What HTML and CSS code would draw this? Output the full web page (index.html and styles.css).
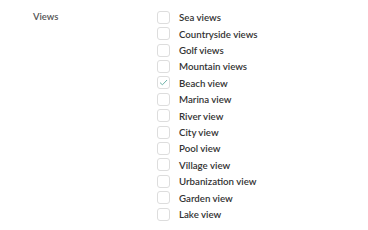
FILE: index.html
```html
<!DOCTYPE html>
<html lang="en">
<head>
	<meta charset="utf-8">
	<title>Views</title>
	<link rel="stylesheet" href="styles.css">
</head>
<body>
	<div class="field">
		<div class="field-label">Views</div>
		<div class="options">
			<label class="option"><span class="box"></span>Sea views</label>
			<label class="option"><span class="box"></span>Countryside views</label>
			<label class="option"><span class="box"></span>Golf views</label>
			<label class="option"><span class="box"></span>Mountain views</label>
			<label class="option"><span class="box checked"><svg width="9" height="7" viewBox="0 0 9 7"><path d="M1 3.6 L3.4 5.8 L8 1" fill="none" stroke="#6fb3a9" stroke-width="1"/></svg></span>Beach view</label>
			<label class="option"><span class="box"></span>Marina view</label>
			<label class="option"><span class="box"></span>River view</label>
			<label class="option"><span class="box"></span>City view</label>
			<label class="option"><span class="box"></span>Pool view</label>
			<label class="option"><span class="box"></span>Village view</label>
			<label class="option"><span class="box"></span>Urbanization view</label>
			<label class="option"><span class="box"></span>Garden view</label>
			<label class="option"><span class="box"></span>Lake view</label>
		</div>
	</div>
</body>
</html>
```

FILE: styles.css
```css
html, body { margin: 0; padding: 0; background: #fff; }

body {
  font-family: Lato, "Open Sans", sans-serif;
  color: #333;
}

.field {
  display: flex;
  padding: 9px 0 0 33px;
}

.field-label {
  width: 124px;
  font-size: 9.5px;
  font-weight: 600;
  color: #555;
  line-height: 16px;
}

.options {
  display: flex;
  flex-direction: column;
}

.option {
  display: flex;
  align-items: center;
  height: 16.42px;
  font-size: 9.7px;
  font-weight: 600;
  color: #333;
}

.box {
  width: 11px;
  height: 11px;
  border: 1px solid #ddd;
  border-radius: 3px;
  margin-right: 9px;
  display: flex;
  align-items: center;
  justify-content: center;
  box-sizing: content-box;
}
```
